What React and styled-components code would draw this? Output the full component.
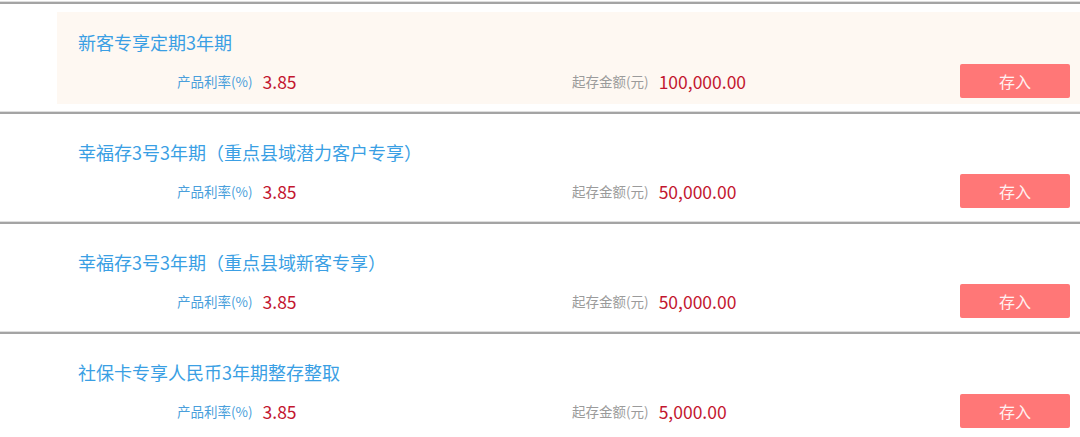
import React from 'react';
import styled, { createGlobalStyle } from 'styled-components';

const GlobalStyle = createGlobalStyle`
  html, body {
    margin: 0;
    padding: 0;
    background: #ffffff;
  }
  body {
    font-family: "Noto Sans CJK SC", "Noto Sans", sans-serif;
  }
`;

const List = styled.div`
  padding-top: 2px;
  width: 1080px;
`;

const Row = styled.div`
  box-sizing: border-box;
  height: 110px;
  border-top: 2px solid #a4a4a4;
  box-shadow: 0 -1px 0 #dedede;
  padding: 8px 0 6px 57px;
`;

const Card = styled.div`
  box-sizing: border-box;
  height: 92px;
  padding: 20px 10px 6px 21px;
  background: ${(p) => (p.$highlight ? '#fef8f2' : 'transparent')};
  display: flex;
  flex-direction: column;
`;

const Title = styled.div`
  font-size: 18px;
  line-height: 20px;
  height: 20px;
  color: #3a9fe4;
  white-space: nowrap;
`;

const Bottom = styled.div`
  margin-top: 12px;
  height: 34px;
  display: flex;
  align-items: center;
  padding-left: 99px;
`;

const Stat = styled.div`
  display: flex;
  align-items: center;
  width: ${(p) => p.$width || 'auto'};
`;

const Label = styled.span`
  font-size: 13.5px;
  color: ${(p) => (p.$muted ? '#9b9b9b' : '#4a9fdc')};
  margin-right: 10px;
`;

const Value = styled.span`
  font-size: 17.5px;
  color: #c3162f;
`;

const Button = styled.button`
  margin-left: auto;
  width: 110px;
  height: 34px;
  border: none;
  border-radius: 2px;
  background: #ff7777;
  color: #fff1f1;
  font-family: inherit;
  font-size: 16px;
  cursor: pointer;
`;

const products = [
  { title: '新客专享定期3年期', rate: '3.85', amount: '100,000.00', highlight: true },
  { title: '幸福存3号3年期（重点县域潜力客户专享）', rate: '3.85', amount: '50,000.00' },
  { title: '幸福存3号3年期（重点县域新客专享）', rate: '3.85', amount: '50,000.00' },
  { title: '社保卡专享人民币3年期整存整取', rate: '3.85', amount: '5,000.00' },
];

export default function App() {
  return (
    <>
      <GlobalStyle />
      <List>
        {products.map((p) => (
          <Row key={p.title}>
            <Card $highlight={p.highlight}>
              <Title>{p.title}</Title>
              <Bottom>
                <Stat $width="395px">
                  <Label>产品利率(%)</Label>
                  <Value>{p.rate}</Value>
                </Stat>
                <Stat>
                  <Label $muted>起存金额(元)</Label>
                  <Value>{p.amount}</Value>
                </Stat>
                <Button>存入</Button>
              </Bottom>
            </Card>
          </Row>
        ))}
      </List>
    </>
  );
}
